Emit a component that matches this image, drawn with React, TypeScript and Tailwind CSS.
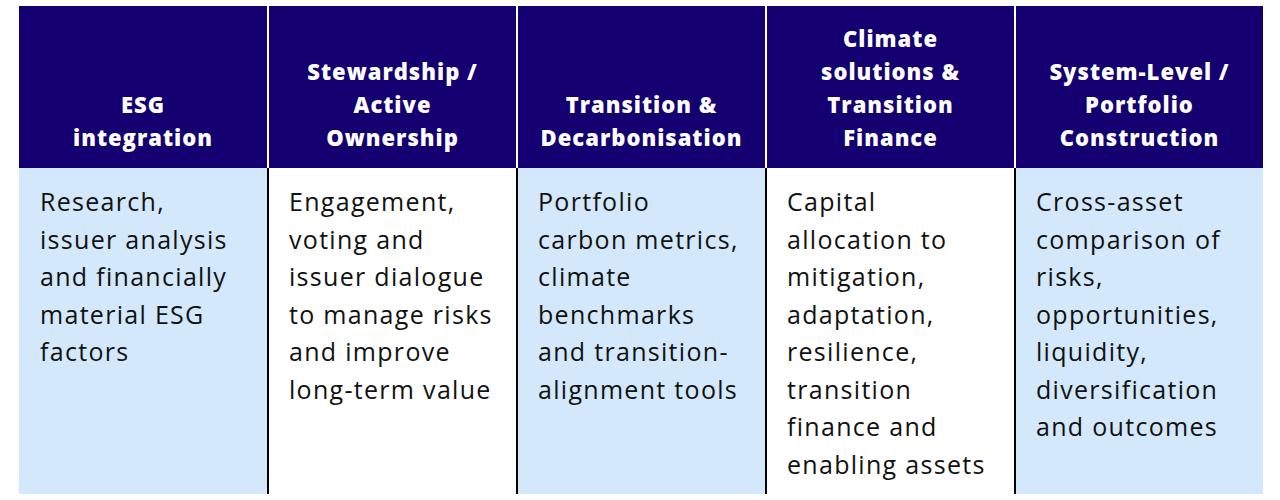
import React from "react";

const columns = [
  {
    title: ["ESG", "integration"],
    body: ["Research,", "issuer analysis", "and financially", "material ESG", "factors"],
    tint: true,
  },
  {
    title: ["Stewardship /", "Active", "Ownership"],
    body: ["Engagement,", "voting and", "issuer dialogue", "to manage risks", "and improve", "long-term value"],
    tint: false,
  },
  {
    title: ["Transition &", "Decarbonisation"],
    body: ["Portfolio", "carbon metrics,", "climate", "benchmarks", "and transition-", "alignment tools"],
    tint: true,
  },
  {
    title: ["Climate", "solutions &", "Transition", "Finance"],
    body: [
      "Capital",
      "allocation to",
      "mitigation,",
      "adaptation,",
      "resilience,",
      "transition",
      "finance and",
      "enabling assets",
    ],
    tint: false,
  },
  {
    title: ["System-Level /", "Portfolio", "Construction"],
    body: ["Cross-asset", "comparison of", "risks,", "opportunities,", "liquidity,", "diversification", "and outcomes"],
    tint: true,
  },
];

export default function App() {
  return (
    <div className="w-[1280px] h-[500px] bg-white pt-[6px] pl-[19px] font-['Open_Sans','Noto_Sans',sans-serif]">
      <div className="grid grid-cols-[250px_249px_249px_249px_247px] grid-rows-[162px_326px] w-[1244px]">
        {columns.map((c, i) => (
          <div
            key={"h" + i}
            className={`bg-[#140070] flex flex-col justify-end items-center pb-[14px] text-white font-extrabold text-[22px] leading-[33px] tracking-[1px] text-center ${
              i < 4 ? "border-r-2 border-white" : ""
            }`}
          >
            {c.title.map((t) => (
              <span key={t}>{t}</span>
            ))}
          </div>
        ))}
        {columns.map((c, i) => (
          <div
            key={"b" + i}
            className={`${c.tint ? "bg-[#d3e8fb]" : "bg-white"} pt-[15px] ${i === 0 ? "pl-[21px]" : "pl-[20px]"} text-[#111] text-[25px] leading-[37.5px] tracking-[1.3px] ${
              i < 4 ? "border-r-2 border-black" : ""
            }`}
          >
            {c.body.map((t) => (
              <div key={t} className="whitespace-nowrap">
                {t}
              </div>
            ))}
          </div>
        ))}
      </div>
    </div>
  );
}
